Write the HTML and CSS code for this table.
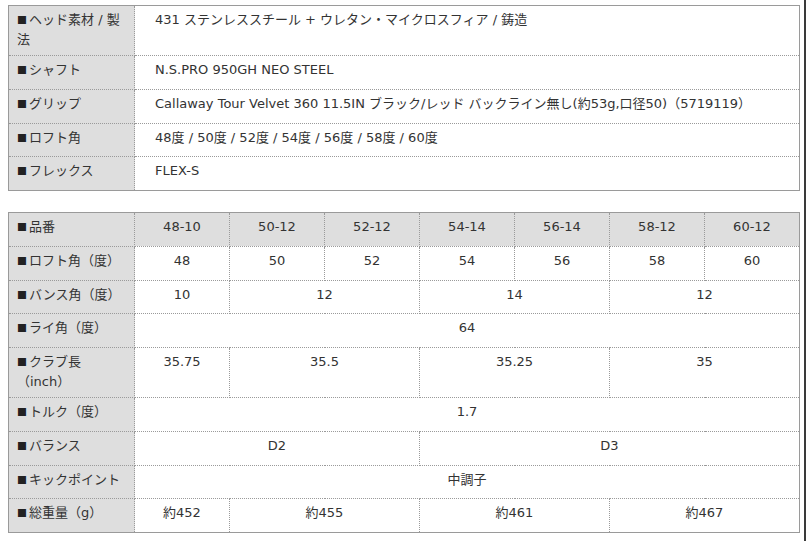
FILE: index.html
```html
<!DOCTYPE html>
<html lang="ja">
<head>
<meta charset="utf-8">
<title>スペック</title>
<link rel="stylesheet" href="styles.css">
</head>
<body>
<table class="spec spec-main">
  <colgroup><col class="c-head"><col></colgroup>
  <tr><th><span class="sq">■</span>ヘッド素材 / 製法</th><td>431 ステンレススチール + ウレタン・マイクロスフィア / 鋳造</td></tr>
  <tr><th><span class="sq">■</span>シャフト</th><td>N.S.PRO 950GH NEO STEEL</td></tr>
  <tr><th><span class="sq">■</span>グリップ</th><td>Callaway Tour Velvet 360 11.5IN ブラック/レッド バックライン無し(約53g,口径50)（5719119）</td></tr>
  <tr><th><span class="sq">■</span>ロフト角</th><td>48度 / 50度 / 52度 / 54度 / 56度 / 58度 / 60度</td></tr>
  <tr><th><span class="sq">■</span>フレックス</th><td>FLEX-S</td></tr>
</table>

<table class="spec spec-grid">
  <colgroup><col class="c-head"><col class="c-val"><col class="c-val"><col class="c-val"><col class="c-val"><col class="c-val"><col class="c-val"><col class="c-val"></colgroup>
  <tr class="hrow"><th><span class="sq">■</span>品番</th><td>48-10</td><td>50-12</td><td>52-12</td><td>54-14</td><td>56-14</td><td>58-12</td><td>60-12</td></tr>
  <tr><th><span class="sq">■</span>ロフト角（度）</th><td>48</td><td>50</td><td>52</td><td>54</td><td>56</td><td>58</td><td>60</td></tr>
  <tr><th><span class="sq">■</span>バンス角（度）</th><td>10</td><td colspan="2">12</td><td colspan="2">14</td><td colspan="2">12</td></tr>
  <tr><th><span class="sq">■</span>ライ角（度）</th><td colspan="7">64</td></tr>
  <tr><th><span class="sq">■</span>クラブ長（inch）</th><td>35.75</td><td colspan="2">35.5</td><td colspan="2">35.25</td><td colspan="2">35</td></tr>
  <tr><th><span class="sq">■</span>トルク（度）</th><td colspan="7">1.7</td></tr>
  <tr><th><span class="sq">■</span>バランス</th><td colspan="3">D2</td><td colspan="4">D3</td></tr>
  <tr><th><span class="sq">■</span>キックポイント</th><td colspan="7">中調子</td></tr>
  <tr><th><span class="sq">■</span>総重量（g）</th><td>約452</td><td colspan="2">約455</td><td colspan="2">約461</td><td colspan="2">約467</td></tr>
</table>
<div class="edge"></div>
</body>
</html>
```

FILE: styles.css
```css
html, body {
  background: #ffffff;
}
body {
  margin: 5px 6px 0 8px;
  font-family: "DejaVu Sans", "Noto Sans CJK JP", sans-serif;
  font-size: 13px;
  line-height: 20px;
  color: #333333;
}
.spec {
  width: 792px;
  table-layout: fixed;
  border-collapse: collapse;
  border: 1px solid #9a9a9a;
}
.spec-main {
  margin-bottom: 21px;
}
.c-head {
  width: 126px;
}
.c-val {
  width: 95px;
}
.spec th,
.spec td {
  border: 1px dotted #9a9a9a;
  padding: 4px 8px 5px;
  vertical-align: top;
  font-weight: normal;
  text-align: left;
  height: 23.75px;
  box-sizing: content-box;
}
.spec th {
  background: #dedede;
}
.spec-main td {
  padding-left: 20px;
}
.spec-grid td {
  text-align: center;
}
.spec-grid .hrow td {
  background: #dedede;
}
.sq {
  font-family: "Noto Sans CJK JP", sans-serif;
  font-size: 10px;
  line-height: 1;
  margin: 0 2px 0 0;
  color: #222;
}
.edge {
  position: fixed;
  top: 0;
  right: 0;
  width: 2px;
  height: 100%;
  background: #3a3a3a;
}
```
